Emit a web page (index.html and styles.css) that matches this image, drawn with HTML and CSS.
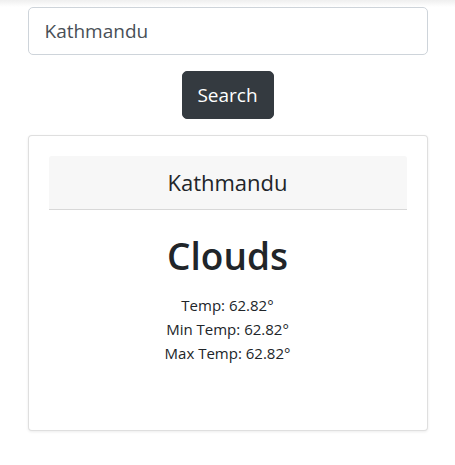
FILE: index.html
```html
<!DOCTYPE html>
<html lang="en">
<head>
<meta charset="utf-8">
<title>Weather</title>
<link rel="stylesheet" href="styles.css">
</head>
<body>
<div class="page">
  <form class="search">
    <input class="search-input" type="text" value="Kathmandu">
    <button class="search-btn" type="button">Search</button>
  </form>
  <div class="card">
    <div class="card-body">
      <div class="card-header"><h4 class="city">Kathmandu</h4></div>
      <h1 class="condition">Clouds</h1>
      <div class="temps">
        <div class="temp">Temp: 62.82°</div>
        <div class="temp">Min Temp: 62.82°</div>
        <div class="temp">Max Temp: 62.82°</div>
      </div>
    </div>
  </div>
</div>
</body>
</html>
```
FILE: styles.css
```css
* { box-sizing: border-box; }
html, body { margin: 0; padding: 0; }
body {
  font-family: "Open Sans", "Noto Sans", sans-serif;
  color: #212529;
  background: linear-gradient(to bottom, #efefef 0, #ffffff 7px) no-repeat, #ffffff;
  min-height: 465px;
}
.page {
  width: 400px;
  margin: 0 auto;
  padding-top: 7px;
}
.search {
  display: flex;
  flex-direction: column;
  align-items: center;
  gap: 16px;
  margin: 0;
}
.search-input {
  width: 100%;
  height: 48px;
  padding: 8px 16px;
  font-family: inherit;
  font-size: 19px;
  color: #495057;
  border: 1px solid #ced4da;
  border-radius: 5px;
  background: #fff;
  outline: none;
}
.search-btn {
  width: 92px;
  height: 48px;
  padding: 0;
  font-family: inherit;
  font-size: 19px;
  color: #fff;
  background: #343a40;
  border: 1px solid #343a40;
  border-radius: 5px;
}
.card {
  margin-top: 16px;
  height: 296px;
  border: 1px solid rgba(0,0,0,.125);
  border-radius: 4px;
  box-shadow: 0 1px 3px rgba(0,0,0,.08);
  background: #fff;
}
.card-body {
  padding: 20px;
  text-align: center;
}
.card-header {
  background: #f7f7f7;
  border-bottom: 1px solid rgba(0,0,0,.125);
  border-radius: 3px 3px 0 0;
  padding: 12px 20px;
}
.city {
  margin: 0;
  font-size: 22px;
  font-weight: 400;
  line-height: 29px;
}
.condition {
  margin: 22px 0 13px;
  font-size: 37px;
  font-weight: 600;
  line-height: 48px;
}
.temps {
  font-size: 15px;
  line-height: 24px;
}
```
